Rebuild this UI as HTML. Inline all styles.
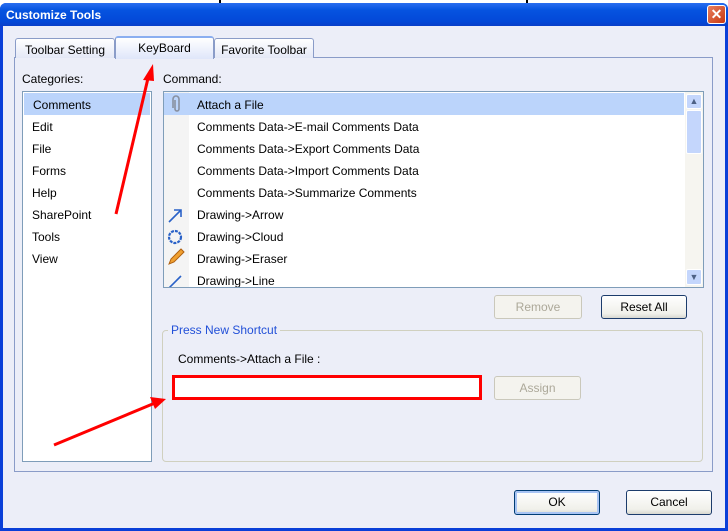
<!DOCTYPE html><html><head><style>
*{box-sizing:border-box;margin:0;padding:0}
body{width:728px;height:531px;overflow:hidden;background:#fff;font-family:"Liberation Sans",sans-serif;font-size:12px;color:#000;position:relative}
.a{position:absolute}
.win{left:0;top:3px;width:728px;height:528px;background:#0a3fd8;border-radius:6px 6px 0 0}
.title{left:0;top:3px;width:728px;height:23px;background:linear-gradient(#2a6ef0,#0654e0 30%,#0348d8 80%,#0a3fc8);border-radius:6px 6px 0 0;color:#fff;font-weight:bold;font-size:12px;padding:5px 0 0 6px}
.body{left:3px;top:26px;width:722px;height:502px;background:#eceef8}
.panel{left:14px;top:57px;width:699px;height:415px;border:1px solid #8a9cc8;background:#eceef8}
.tab{top:38px;height:20px;border:1px solid #8a9cc8;border-bottom:none;border-radius:3px 3px 0 0;background:linear-gradient(#fff,#e4e8f6);text-align:center;padding-top:3px}
.list{background:#fff;border:1px solid #7f9db9}
.row{position:absolute;left:0;height:22px;line-height:24px;width:100%}
.btn{border:1px solid #1c3c6c;border-radius:3px;background:linear-gradient(#fff,#f0f0ea 80%,#d8d8d0);text-align:center;line-height:22px}
.dis{border:1px solid #cac8bb;border-radius:3px;background:#f4f3ee;color:#aca899;text-align:center;line-height:22px}
</style></head><body>
<div class="a" style="left:219px;top:0;width:2px;height:3px;background:#000"></div>
<div class="a" style="left:526px;top:0;width:2px;height:3px;background:#000"></div>
<div class="a win"></div>
<div class="a title">Customize Tools</div>
<div class="a" style="left:707px;top:5px;width:19px;height:19px;background:linear-gradient(135deg,#e88060,#c83810);border:1px solid #fff;border-radius:3px;color:#fff;font-weight:bold;font-size:14px;text-align:center;line-height:17px">✕</div>
<div class="a body"></div>
<div class="a panel"></div>
<div class="a tab" style="left:15px;width:100px;padding-top:4px">Toolbar Setting</div>
<div class="a tab" style="left:214px;width:100px;padding-top:4px">Favorite Toolbar</div>
<div class="a tab" style="left:115px;top:36px;width:99px;height:23px;background:linear-gradient(#fff,#dfe6fa);border-top:2px solid #8aaef0;padding-top:3px">KeyBoard</div>
<div class="a" style="left:22px;top:72px">Categories:</div>
<div class="a" style="left:163px;top:72px">Command:</div>
<div class="a list" style="left:22px;top:91px;width:130px;height:371px">
<div class="row" style="top:1px;background:#bbd4fb;padding-left:9px;width:126px;left:1px">Comments</div>
<div class="row" style="top:23px;padding-left:9px">Edit</div>
<div class="row" style="top:45px;padding-left:9px">File</div>
<div class="row" style="top:67px;padding-left:9px">Forms</div>
<div class="row" style="top:89px;padding-left:9px">Help</div>
<div class="row" style="top:111px;padding-left:9px">SharePoint</div>
<div class="row" style="top:133px;padding-left:9px">Tools</div>
<div class="row" style="top:155px;padding-left:9px">View</div>
</div>
<div class="a list" style="left:163px;top:91px;width:541px;height:197px;overflow:hidden">
<div class="a" style="left:0;top:0;width:25px;height:197px;background:#f4f4f4"></div>
<div class="row" style="top:1px;background:#bbd4fb;width:520px"></div>
<div class="row" style="top:1px;padding-left:33px">Attach a File</div>
<div class="row" style="top:23px;padding-left:33px">Comments Data-&gt;E-mail Comments Data</div>
<div class="row" style="top:45px;padding-left:33px">Comments Data-&gt;Export Comments Data</div>
<div class="row" style="top:67px;padding-left:33px">Comments Data-&gt;Import Comments Data</div>
<div class="row" style="top:89px;padding-left:33px">Comments Data-&gt;Summarize Comments</div>
<div class="row" style="top:111px;padding-left:33px">Drawing-&gt;Arrow</div>
<div class="row" style="top:133px;padding-left:33px">Drawing-&gt;Cloud</div>
<div class="row" style="top:155px;padding-left:33px">Drawing-&gt;Eraser</div>
<div class="row" style="top:177px;padding-left:33px">Drawing-&gt;Line</div>
<svg class="a" style="left:0;top:0" width="25" height="197">
<path d="M9 16V7a3 3 0 0 1 6 0v10a2 2 0 0 1-4 0V8" fill="none" stroke="#8890a0" stroke-width="1.6"/>
<path d="M5 130L17 118M10 118h7v7" fill="none" stroke="#2a62c8" stroke-width="1.6"/>
<circle cx="11" cy="145" r="6" fill="none" stroke="#2a62c8" stroke-width="2.2" stroke-dasharray="3 1"/>
<path d="M5 172l2-5 10-10 3 3-10 10z" fill="#f0a030" stroke="#b06010"/>
<path d="M5 196L17 184" stroke="#2a62c8" stroke-width="1.6"/>
</svg>
<div class="a" style="left:521px;top:0;width:18px;height:195px;background:#f6f5f0"></div>
<div class="a" style="left:522px;top:2px;width:16px;height:15px;background:#c4d6fc;border:1px solid #fff;border-radius:2px;color:#4d6185;font-size:9px;text-align:center;line-height:13px">▲</div>
<div class="a" style="left:522px;top:18px;width:16px;height:44px;background:#c4d6fc;border:1px solid #fff;border-radius:2px"></div>
<div class="a" style="left:522px;top:177px;width:16px;height:16px;background:#c4d6fc;border:1px solid #fff;border-radius:2px;color:#4d6185;font-size:9px;text-align:center;line-height:14px">▼</div>
</div>
<div class="a dis" style="left:494px;top:295px;width:88px;height:24px">Remove</div>
<div class="a btn" style="left:601px;top:295px;width:86px;height:24px">Reset All</div>
<div class="a" style="left:162px;top:330px;width:541px;height:132px;border:1px solid #d0d0bf;border-radius:4px"></div>
<div class="a" style="left:168px;top:323px;background:#eceef8;color:#2250d8;padding:0 3px">Press New Shortcut</div>
<div class="a" style="left:178px;top:352px">Comments-&gt;Attach a File :</div>
<div class="a" style="left:172px;top:375px;width:310px;height:25px;border:3px solid #f00;background:#fff"></div>
<div class="a dis" style="left:494px;top:376px;width:87px;height:24px">Assign</div>
<div class="a btn" style="left:514px;top:490px;width:86px;height:25px;border-color:#003c74;box-shadow:inset 0 0 0 2px #a8c4f4">OK</div>
<div class="a btn" style="left:626px;top:490px;width:86px;height:25px">Cancel</div>
<svg class="a" style="left:0;top:0" width="728" height="531">
<path d="M116 214L149 74" stroke="#f00" stroke-width="3"/>
<path d="M153 64L143 80L154 81Z" fill="#f00"/>
<path d="M54 445L155 403" stroke="#f00" stroke-width="3"/>
<path d="M166 399L150 397L155 409Z" fill="#f00"/>
</svg>
</body></html>
